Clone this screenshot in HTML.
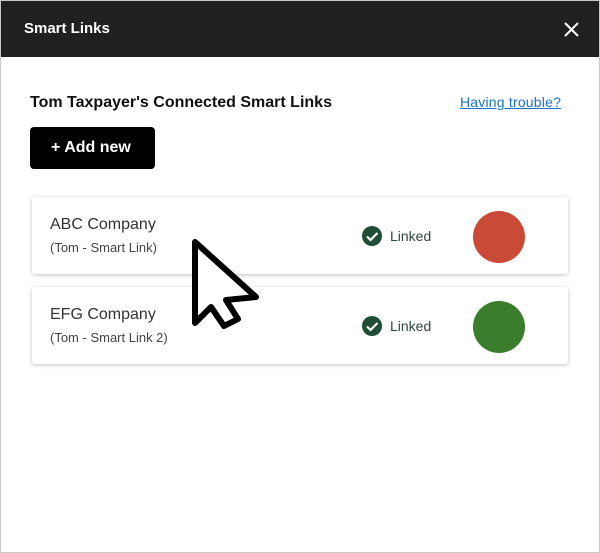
<!DOCTYPE html>
<html><head><style>
*{margin:0;padding:0;box-sizing:border-box}
body{width:600px;height:553px;background:#fff;font-family:"Liberation Sans",sans-serif;position:relative;overflow:hidden}
.frame{position:absolute;left:0;top:0;width:600px;height:553px;border:1px solid #c8c8c8}
.hdr{position:absolute;left:1px;top:1px;width:598px;height:56px;background:#202020;color:#fff}
.hdr .t{position:absolute;left:23px;top:19px;font-size:15px;font-weight:bold}
.x{position:absolute;left:563px;top:21px}
.h2{position:absolute;left:30px;top:94px;font-size:16px;font-weight:bold;color:#111}
.lnk{position:absolute;left:460px;top:94px;font-size:14px;color:#1a73c8;text-decoration:underline;letter-spacing:.2px}
.btn{position:absolute;left:30px;top:127px;width:125px;height:42px;background:#000;border-radius:4px;color:#fff;font-size:16px;font-weight:bold;line-height:42px;padding-left:21px}
.card{position:absolute;left:32px;width:536px;height:77px;background:#fff;border-radius:3px;box-shadow:0 1px 4px rgba(0,0,0,.25)}
.n{position:absolute;left:18px;top:19px;font-size:16px;color:#333}
.s{position:absolute;left:18px;top:43px;font-size:13px;color:#444}
.chk{position:absolute;left:330px;top:29px;width:20px;height:20px;border-radius:50%;background:#1f4d36}
.lk{position:absolute;left:358px;top:31px;font-size:14px;color:#2c4a3a}
.dot{position:absolute;left:441px;top:14px;width:52px;height:52px;border-radius:50%}
</style></head><body>
<div class="frame"></div>
<div class="hdr"><div class="t">Smart Links</div>
<svg class="x" width="15" height="15" viewBox="0 0 15 15"><path d="M1 1L14 14M14 1L1 14" stroke="#fff" stroke-width="2"/></svg></div>
<div class="h2">Tom Taxpayer's Connected Smart Links</div>
<div class="lnk">Having trouble?</div>
<div class="btn">+ Add new</div>
<div class="card" style="top:197px"><div class="n">ABC Company</div><div class="s">(Tom - Smart Link)</div>
<div class="chk"><svg width="20" height="20"><path d="M5 10.5l3.5 3.5 7-7" stroke="#fff" stroke-width="2.2" fill="none"/></svg></div><div class="lk">Linked</div><div class="dot" style="background:#c94a36"></div></div>
<div class="card" style="top:287px"><div class="n">EFG Company</div><div class="s">(Tom - Smart Link 2)</div>
<div class="chk"><svg width="20" height="20"><path d="M5 10.5l3.5 3.5 7-7" stroke="#fff" stroke-width="2.2" fill="none"/></svg></div><div class="lk">Linked</div><div class="dot" style="background:#3a7d2c"></div></div>
<svg style="position:absolute;left:0;top:0" width="600" height="553"><path d="M195 242L195 323L211 307L224 326L238 319L226 300L256 297Z" fill="#fff" stroke="#000" stroke-width="6" stroke-linejoin="round"/></svg>
</body></html>
